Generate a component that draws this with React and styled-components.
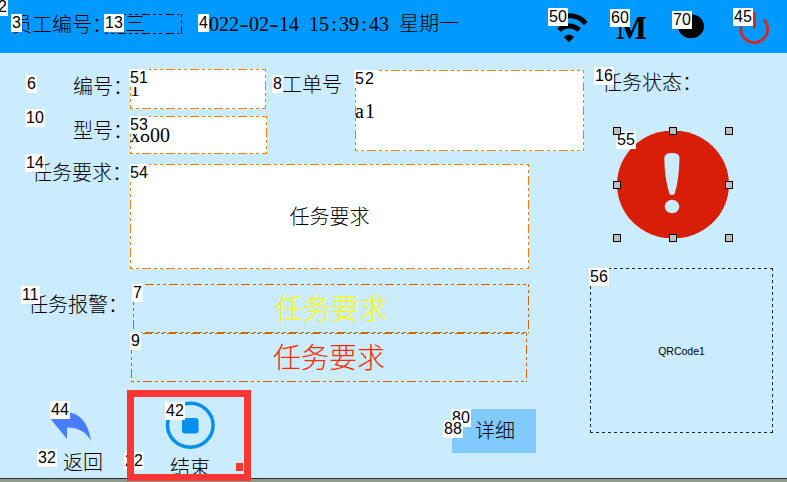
import React from "react";
import styled, { createGlobalStyle, css } from "styled-components";

const GlobalStyle = createGlobalStyle`
  * { box-sizing: border-box; }
  html, body { margin: 0; padding: 0; }
  body {
    width: 787px;
    height: 482px;
    overflow: hidden;
    background: #8f9c8c;
  }
`;

const Screen = styled.div`
  position: relative;
  display: flex;
  flex-direction: column;
  width: 787px;
  height: 482px;
  overflow: hidden;
  background: #8f9c8c;
  color: #000;
  font-family: "Liberation Serif", "Noto Sans CJK SC", serif;
  font-weight: 300;
  font-size: 20px;
  line-height: 24px;
  white-space: nowrap;
`;

const Header = styled.header`
  display: flex;
  flex: none;
  align-items: flex-start;
  height: 53px;
  padding-left: 11px;
  background: #0099ff;
`;

const Main = styled.main`
  display: flex;
  height: 426px;
  border-bottom: 1px solid #2b2f33;
  background: #cbecff;
`;

const Workspace = styled.section`
  flex: none;
  width: 589px;
  padding-top: 16px;
`;

const StatusPanel = styled.aside`
  display: flex;
  flex: 1;
  flex-direction: column;
  padding-top: 18px;
`;

/* Object number shown over the corner of each widget. */
const Tag = styled.span`
  position: absolute;
  z-index: 2;
  left: ${(p) => p.$x || 0}px;
  top: ${(p) => p.$y || 0}px;
  height: 18px;
  padding: 0 1px;
  background: #fff;
  color: #000;
  font: 400 16px/18px "Liberation Sans", sans-serif;
`;

const Label = styled.div`
  position: relative;
  flex: none;
  width: ${(p) => p.$width}px;
  height: 24px;
  margin-top: ${(p) => p.$top || 0}px;
  padding-left: ${(p) => p.$indent || 0}px;
`;

const dashDot = (dir, c) =>
  `repeating-linear-gradient(to ${dir}, ${c} 0 3px, transparent 3px 6px, ${c} 6px 9px, transparent 9px 12px, ${c} 12px 21px, transparent 21px 24px)`;
const dots = (dir, c) =>
  `repeating-linear-gradient(to ${dir}, ${c} 0 3px, transparent 3px 6px)`;

const outline = (line, c) => css`
  background-image: ${line("right", c)}, ${line("right", c)},
    ${line("bottom", c)}, ${line("bottom", c)};
  background-position: 0 0, 0 100%, 0 0, 100% 0;
  background-size: 100% 1px, 100% 1px, 1px 100%, 1px 100%;
  background-repeat: no-repeat;
`;

const Field = styled.div`
  position: relative;
  display: flex;
  flex: none;
  align-items: center;
  justify-content: ${(p) => (p.$center ? "center" : "flex-start")};
  width: ${(p) => p.$width}px;
  height: ${(p) => p.$height}px;
  background-color: ${(p) => p.$fill || "transparent"};
  ${(p) => outline(dashDot, p.$line || "#ff8000")}
`;

const Employee = styled(Field)`
  margin: 14px 16px 0 -6px;
`;

const Clock = styled.div`
  position: relative;
  width: 350px;
  height: 24px;
  margin-top: 12px;
  padding-left: 1px;
`;

const Separator = styled.span`
  display: inline-block;
  width: 10px;
  text-align: center;
`;

const WideDash = styled(Separator)`
  transform: scaleX(1.4);
`;

const HeaderIcon = styled.div`
  position: relative;
  flex: none;
  width: ${(p) => p.$width}px;
  height: 53px;

  svg { display: block; }
`;

const Row = styled.div`
  display: flex;
  align-items: flex-start;
  margin-top: ${(p) => p.$top || 0}px;
`;

const FieldStack = styled.div`
  display: flex;
  flex-direction: column;
  gap: 7px;
  width: 268px;
`;

const OrderField = styled(Field)`
  margin-top: 1px;
  letter-spacing: 1px;
`;

const AlarmStack = styled.div`
  display: flex;
  flex-direction: column;
`;

const AlarmField = styled(Field)`
  padding-top: 2px;
  font-size: 28px;
  line-height: 34px;
  color: ${(p) => p.$color};
`;

const WarningField = styled(AlarmField)`
  margin-left: 2px;
`;

const Actions = styled.div`
  display: flex;
  align-items: flex-start;
  margin-top: 8px;
`;

const Action = styled.div`
  position: relative;
  display: flex;
  flex-direction: column;
  align-items: flex-start;

  svg { display: block; flex: none; }
`;

const BackAction = styled(Action)`
  gap: 8px;
  width: 127px;
  padding: 11px 0 0 50px;
`;

const EndAction = styled(Action)`
  gap: 5px;
  width: 124px;
  height: 91px;
  padding: 11px 0 0 38px;
`;

const ActionText = styled.div`
  height: 24px;
  padding-left: ${(p) => p.$indent}px;
`;

const Highlight = styled.div`
  position: absolute;
  z-index: 3;
  inset: 0;
  display: flex;
  align-items: flex-end;
  justify-content: flex-end;
  padding: 0 1px 3px 0;
  border: 7px solid #fc3535;
`;

const HighlightGrip = styled.span`
  width: 7px;
  height: 8px;
  background: #fc3535;
`;

const DetailButton = styled.button`
  position: relative;
  width: 84px;
  height: 44px;
  margin: 19px 0 0 201px;
  padding: 0 0 0 2px;
  border: 0;
  background: #80caff;
  color: #000;
  font: inherit;
`;

const StatusPicture = styled.div`
  position: relative;
  width: 112px;
  height: 107px;
  margin: 36px 0 30px 28px;

  svg { display: block; }
`;

const HandleGrid = styled.div`
  position: absolute;
  z-index: 3;
  inset: -4px;
  display: grid;
  grid-template-columns: repeat(3, 8px);
  grid-template-rows: repeat(3, 8px);
  align-content: space-between;
  justify-content: space-between;
`;

const Handle = styled.span`
  border: 1px solid #000;
  background: #c0c0c0;

  &:nth-child(5) { visibility: hidden; }
`;

const QrBox = styled.div`
  position: relative;
  display: flex;
  align-items: center;
  justify-content: center;
  width: 183px;
  height: 165px;
  margin-left: 1px;
  font: 400 10.5px/14px "Liberation Sans", sans-serif;
  ${outline(dots, "#222")}
`;

const WifiIcon = () => (
  <svg width="42" height="46" viewBox="0 0 42 46">
    <path d="M5.8 22.9A21 21 0 0 1 37.8 23.6" fill="none" stroke="#000" strokeWidth="5" />
    <path d="M10.8 30A14.8 14.8 0 0 1 31.2 30" fill="none" stroke="#000" strokeWidth="5" />
    <path d="M15.8 37Q21 32.5 26.2 37L21 42.3Z" />
  </svg>
);

const ModeLetter = styled.div`
  padding: 12px 0 0 6px;
  font: 700 33px/32px "Liberation Serif", serif;
`;

const PowerIcon = () => (
  <svg width="40" height="46" viewBox="0 0 40 46">
    <path d="M11.8 19.6A13.4 13.4 0 1 0 30.6 19.6M21.4 12V28.5" fill="none" stroke="#d6281c" strokeWidth="2.8" />
  </svg>
);

const AlertIcon = () => (
  <svg width="112" height="107" viewBox="0 0 112 107">
    <ellipse cx="56" cy="53.5" rx="56" ry="54" fill="#d81e06" />
    <path d="M47.3 27Q47.5 22 55 22Q62.7 22 62.5 27Q62 50 57.5 63Q55 65 52.5 63Q47.5 47 47.3 27Z" fill="#cbecff" />
    <ellipse cx="55" cy="75.5" rx="7.3" ry="6.8" fill="#cbecff" />
  </svg>
);

const BackIcon = () => (
  <svg width="42" height="42" viewBox="0 0 42 42">
    <path d="M1 18.5L17 2V11Q37 13 41 40Q34 26.5 17 26.5V38Z" fill="#477dff" />
  </svg>
);

const StopIcon = () => (
  <svg width="50" height="50" viewBox="0 0 50 50">
    <ellipse cx="25.3" cy="24.3" rx="22.8" ry="22" fill="none" stroke="#0090f0" strokeWidth="3.5" />
    <rect x="17" y="17" width="16.5" height="15.5" rx="3" fill="#0090f0" />
  </svg>
);

/* Punctuation takes the same 10px cell as a digit. */
const Digits = ({ children }) =>
  children.split(/([-:])/).map((part, i) => {
    if (part === "-") return <WideDash key={i}>-</WideDash>;
    if (part === ":") return <Separator key={i}>:</Separator>;
    return part;
  });

export default function App() {
  return (
    <>
      <GlobalStyle />
      <Screen>
        <Tag $x={-3} $y={-2}>2</Tag>
        <Header>
          <Label $width={100} $top={13} $indent={1}>员工编号：<Tag $y={1}>3</Tag></Label>
          <Employee $width={77} $height={20} $line="#000">
            张三<Tag $x={-1}>13</Tag>
          </Employee>
          <Clock>
            <Digits>2022-02-14</Digits>
            <Separator> </Separator>
            <Digits>15:39:43</Digits>
            <Separator> </Separator>
            星期一
            <Tag $y={2}>4</Tag>
          </Clock>
          <HeaderIcon $width={62}><WifiIcon /><Tag $y={8}>50</Tag></HeaderIcon>
          <HeaderIcon $width={62}><ModeLetter>M</ModeLetter><Tag $y={9}>60</Tag></HeaderIcon>
          <HeaderIcon $width={61}>
            <svg width="40" height="46"><ellipse cx="19" cy="26.3" rx="13" ry="12" /></svg>
            <Tag $y={11}>70</Tag>
          </HeaderIcon>
          <HeaderIcon $width={42}><PowerIcon /><Tag $y={8}>45</Tag></HeaderIcon>
        </Header>
        <Main>
          <Workspace>
            <Row>
              <FieldStack>
                <Row>
                  <Label $width={130} $indent={73} $top={6}>编号：<Tag $x={26}>6</Tag></Label>
                  <Field $width={136} $height={40} $fill="#fff">1<Tag $x={-1}>51</Tag></Field>
                </Row>
                <Row>
                  <Label $width={130} $indent={73} $top={3}>型号：<Tag $x={25} $y={-10}>10</Tag></Label>
                  <Field $width={137} $height={38} $fill="#fff">x800<Tag $x={-1}>53</Tag></Field>
                </Row>
              </FieldStack>
              <Label $width={87} $indent={14} $top={4}>工单号<Tag $x={4} $y={2}>8</Tag></Label>
              <OrderField $width={229} $height={81} $fill="#fff">a1<Tag $x={-1}>52</Tag></OrderField>
            </Row>
            <Row $top={10}>
              <Label $width={130} $indent={32} $top={-3}>任务要求：<Tag $x={25} $y={-7}>14</Tag></Label>
              <Field $width={399} $height={105} $fill="#fff" $center>任务要求<Tag $x={-1}>54</Tag></Field>
            </Row>
            <Row $top={15}>
              <Label $width={131} $indent={28} $top={9}>任务报警：<Tag $x={21} $y={-7}>11</Tag></Label>
              <AlarmStack>
                <WarningField $width={396} $height={49} $line="#cc6600" $color="#ffff00" $center>
                  任务要求<Tag $x={-1}>7</Tag>
                </WarningField>
                <AlarmField $width={396} $height={49} $line="#cc6600" $color="#ff2a00" $center>
                  任务要求<Tag $x={-1} $y={-1}>9</Tag>
                </AlarmField>
              </AlarmStack>
            </Row>
            <Actions>
              <BackAction>
                <BackIcon />
                <ActionText $indent={13}>返回</ActionText>
                <Tag $x={50} $y={11}>44</Tag>
                <Tag $x={37} $y={59}>32</Tag>
              </BackAction>
              <EndAction>
                <StopIcon />
                <ActionText $indent={5}>结束</ActionText>
                <Tag $x={38} $y={12}>42</Tag>
                <Tag $x={-3} $y={62}>22</Tag>
                <Highlight><HighlightGrip /></Highlight>
              </EndAction>
              <DetailButton>
                详细
                <Tag $x={-1}>80</Tag>
                <Tag $x={-9} $y={11}>88</Tag>
              </DetailButton>
            </Actions>
          </Workspace>
          <StatusPanel>
            <Label $width={130} $indent={13}>任务状态：<Tag $x={5} $y={-4}>16</Tag></Label>
            <StatusPicture>
              <AlertIcon />
              <Tag $x={-1}>55</Tag>
              <HandleGrid>
                {Array.from({ length: 9 }, (_, i) => <Handle key={i} />)}
              </HandleGrid>
            </StatusPicture>
            <QrBox>QRCode1<Tag $x={-1}>56</Tag></QrBox>
          </StatusPanel>
        </Main>
      </Screen>
    </>
  );
}
